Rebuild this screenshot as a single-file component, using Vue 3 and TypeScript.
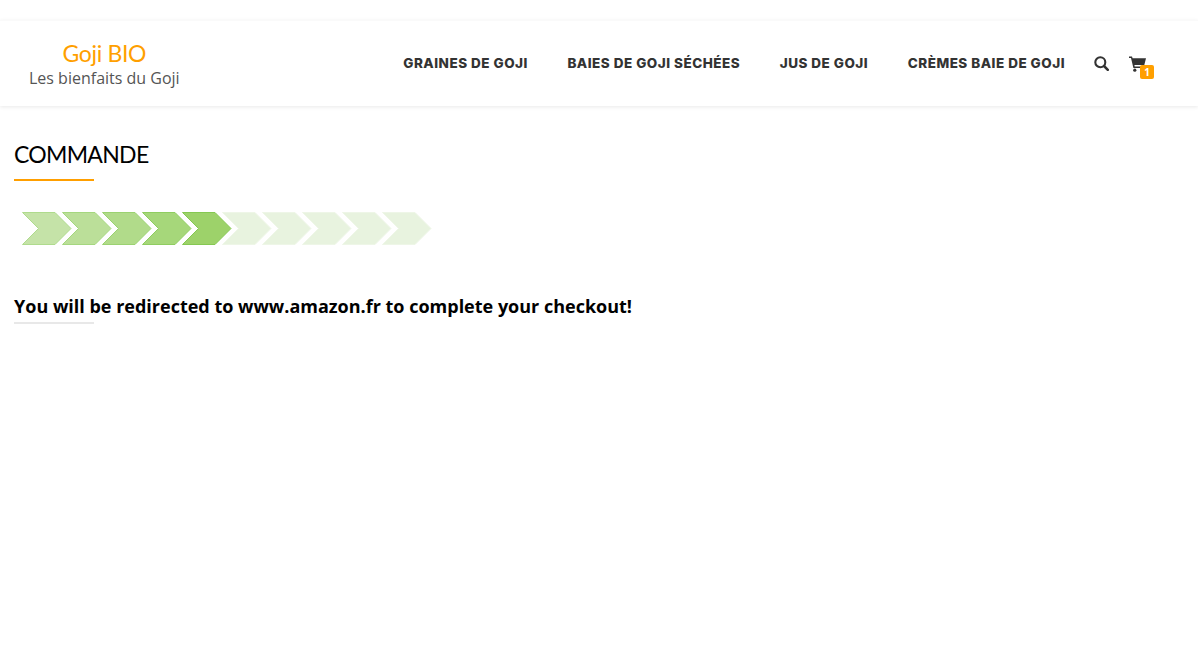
<script setup lang="ts">
const navItems = ['GRAINES DE GOJI', 'BAIES DE GOJI SÉCHÉES', 'JUS DE GOJI', 'CRÈMES BAIE DE GOJI']

const steps = [
  { fill: '#c5e3a8', stroke: '#afdb8d' },
  { fill: '#bbdf99', stroke: '#a5d77f' },
  { fill: '#b1db8a', stroke: '#9bd271' },
  { fill: '#a6d77a', stroke: '#8fcd60' },
  { fill: '#9dd26a', stroke: '#85c852' },
  { fill: '#e8f3df', stroke: '#eef6e7' },
  { fill: '#e8f3df', stroke: '#eef6e7' },
  { fill: '#e8f3df', stroke: '#eef6e7' },
  { fill: '#e8f3df', stroke: '#eef6e7' },
  { fill: '#e8f3df', stroke: '#eef6e7' },
]

function chevron(i: number): string {
  const x = 0.5 + i * 40
  return `${x},0.5 ${x + 32.5},0.5 ${x + 48.5},16.5 ${x + 32.5},32.5 ${x},32.5 ${x + 16},16.5`
}
</script>

<template>
  <div class="page">
    <header class="site-header">
      <a class="brand">
        <span class="brand-name">Goji BIO</span>
        <span class="brand-tag">Les bienfaits du Goji</span>
      </a>
      <nav class="nav">
        <a v-for="item in navItems" :key="item" class="nav-link">{{ item }}</a>
      </nav>
      <div class="tools">
        <svg class="search" viewBox="0 0 15 15" fill="none" stroke="#333" stroke-width="2.1" stroke-linecap="round">
          <circle cx="6.3" cy="6.3" r="5" />
          <path d="M10 10l3.8 3.8" stroke-width="2.5" />
        </svg>
        <div class="cart">
          <svg viewBox="0 0 18 16" width="18" height="16" fill="#333">
            <path d="M0 0.6h3l.6 1.7H17l-1.7 6.8H5.4l.3 1.4h9.6v1.4H4.4L2 2H0z" />
            <circle cx="5.8" cy="14.2" r="1.6" />
            <circle cx="13.6" cy="14.2" r="1.6" />
          </svg>
          <span class="badge">1</span>
        </div>
      </div>
    </header>

    <main class="content">
      <h1 class="title">COMMANDE</h1>
      <svg class="steps" width="411" height="33" viewBox="0 0 411 33">
        <polygon
          v-for="(step, i) in steps"
          :key="i"
          :points="chevron(i)"
          :fill="step.fill"
          :stroke="step.stroke"
        />
      </svg>
      <h2 class="notice">You will be redirected to www.amazon.fr to complete your checkout!</h2>
    </main>
  </div>
</template>

<style>
html, body {
  background: #fff;
}
</style>

<style scoped>
.page {
  min-height: 672px;
  background: #fff;
  padding-top: 20px;
  box-sizing: border-box;
}

.site-header {
  display: flex;
  align-items: center;
  height: 86px;
  box-sizing: border-box;
  padding: 0 51px 2px 29px;
  border-top: 1px solid #fafafa;
  box-shadow: 0 1px 4px rgba(0, 0, 0, 0.09);
}

.brand {
  display: flex;
  flex-direction: column;
  align-items: center;
}
.brand-name {
  font-family: Lato, sans-serif;
  font-size: 23px;
  letter-spacing: -0.35px;
  line-height: 30px;
  color: #ff9f00;
}
.brand-tag {
  font-family: "Open Sans", sans-serif;
  font-size: 16px;
  line-height: 20px;
  color: #555;
}

.nav {
  display: flex;
  gap: 39.5px;
  margin-left: auto;
}
.nav-link {
  font-family: Inter, sans-serif;
  font-size: 13.5px;
  font-weight: 800;
  letter-spacing: 0.5px;
  line-height: 18px;
  color: #333;
}

.tools {
  display: flex;
  align-items: center;
  gap: 20px;
  margin: 2px 0 0 29px;
}
.search {
  width: 15px;
  height: 15px;
}
.cart {
  position: relative;
  display: flex;
  width: 18px;
  height: 16px;
}
.badge {
  position: absolute;
  left: 11px;
  top: 9px;
  width: 14px;
  height: 14px;
  border-radius: 2px;
  background: #ff9f00;
  color: #fff;
  font-family: "Open Sans", sans-serif;
  font-size: 10px;
  font-weight: 700;
  line-height: 14px;
  text-align: center;
}

.content {
  padding: 0 14px;
}

.title {
  margin: 32px 0 0;
  font-family: Lato, sans-serif;
  font-size: 23px;
  font-weight: 400;
  letter-spacing: -0.7px;
  line-height: 32px;
  color: #000;
}
.title::after {
  content: "";
  display: block;
  width: 80px;
  height: 2px;
  margin-top: 9px;
  background: #ff9f00;
}

.steps {
  display: block;
  margin: 31px 0 0 8px;
}

.notice {
  margin: 49px 0 0;
  font-family: "Open Sans", sans-serif;
  font-size: 18px;
  font-weight: 700;
  line-height: 25px;
  color: #000;
}
.notice::after {
  content: "";
  display: block;
  width: 80px;
  height: 2px;
  margin-top: 3px;
  background: #e8e8e8;
}
</style>
